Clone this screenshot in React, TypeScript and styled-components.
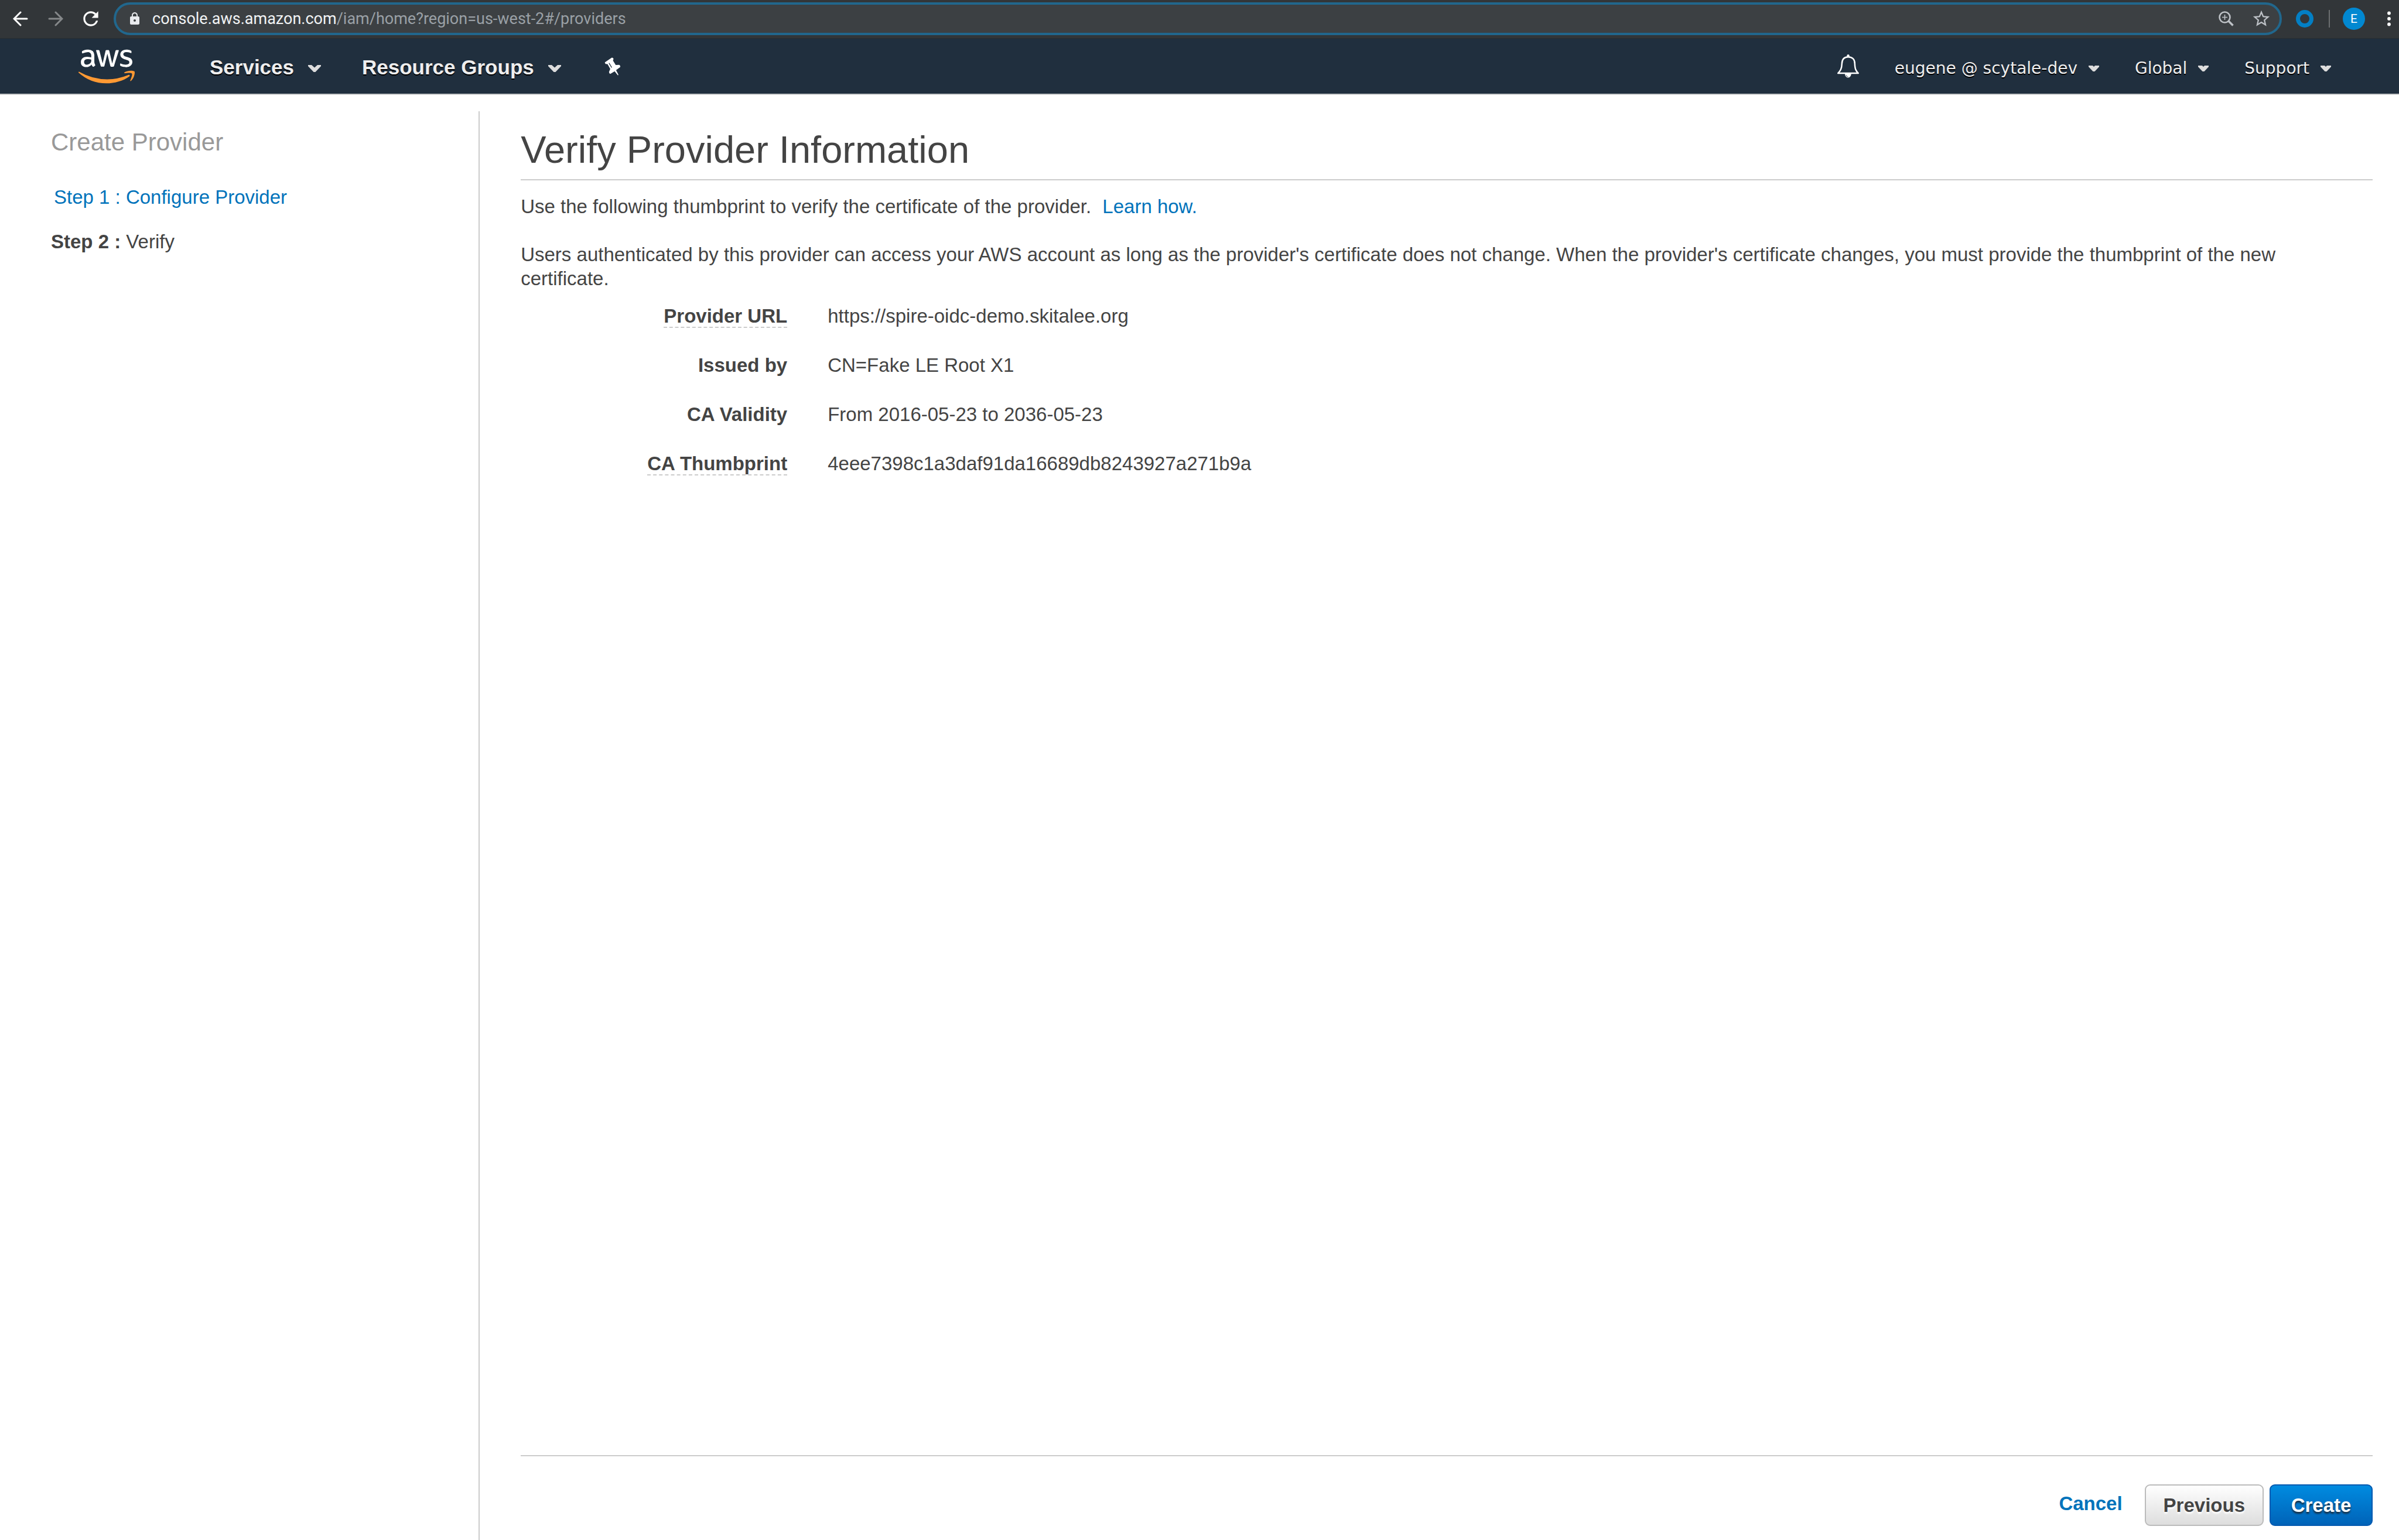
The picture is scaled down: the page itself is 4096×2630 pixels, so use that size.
import React from 'react';
import styled, { createGlobalStyle, css } from 'styled-components';
import { FaAws } from 'react-icons/fa';
import { MdLock, MdRefresh, MdStarBorder } from 'react-icons/md';

const sans = '"Helvetica Neue", "Liberation Sans", Arial, sans-serif';
const ink = '#444444';
const linkBlue = '#0073bb';
const rule = '#cccccc';
const navBlue = '#202f3e';

const GlobalStyle = createGlobalStyle`
  *, *::before, *::after { box-sizing: border-box; }
  html, body, #root { height: 100%; }
  body {
    margin: 0;
    background: #ffffff;
    color: ${ink};
    font: 33px/41px ${sans};
  }
  a { text-decoration: none; }
  button { font: inherit; cursor: pointer; }
  svg { flex: none; }
  h1, h2, p, dl, dd, dt, ol { margin: 0; padding: 0; font-weight: normal; }
`;

const Page = styled.div`
  display: flex;
  flex-direction: column;
  min-height: 100vh;
`;

/* Browser toolbar */

const Toolbar = styled.div`
  display: flex;
  align-items: center;
  height: 66px;
  padding: 0 14px 2px 20px;
  background: #323639;
  border-bottom: 1px solid #2a2d30;
`;

const ToolButton = styled.button<{ $dim?: boolean }>`
  display: flex;
  align-items: center;
  justify-content: center;
  width: 30px;
  height: 36px;
  margin-right: 30px;
  padding: 0;
  border: 0;
  background: none;
  color: ${(p) => (p.$dim ? '#85888a' : '#ffffff')};
`;

const AddressBar = styled.div`
  display: flex;
  flex: 1;
  align-items: center;
  height: 56px;
  margin-left: -6px;
  padding: 0 14px 0 20px;
  border: 4px solid #21678d;
  border-radius: 28px;
  background: #3c4043;
  color: #bdc1c6;
`;

const Url = styled.div`
  flex: 1;
  margin-left: 18px;
  color: #9aa0a6;
  font: 27px/36px Roboto, sans-serif;
`;

const Host = styled.span`
  color: #f1f3f4;
`;

const BarIcons = styled.div`
  display: flex;
  align-items: center;
  gap: 30px;
`;

const PlainButton = styled.button`
  display: flex;
  padding: 0;
  border: 0;
  background: none;
  color: inherit;
`;

const Ring = styled.span`
  width: 30px;
  height: 30px;
  margin-left: 24px;
  border: 7px solid #037fc4;
  border-radius: 50%;
`;

const Separator = styled.span`
  width: 2px;
  height: 30px;
  margin: 0 22px 0 26px;
  background: #6b6e70;
`;

const Avatar = styled.button`
  display: flex;
  align-items: center;
  justify-content: center;
  width: 38px;
  height: 38px;
  margin-right: 38px;
  padding: 0;
  border: 0;
  border-radius: 50%;
  background: #0288d1;
  color: #ffffff;
  && { font: 21px/24px Roboto, sans-serif; }
`;

/* AWS navigation */

const Nav = styled.header`
  display: flex;
  align-items: center;
  height: 96px;
  padding: 0 116px 0 134px;
  background: ${navBlue};
  border-bottom: 2px solid #c8cacb;
`;

const Logo = styled.a`
  display: flex;
  margin-right: 128px;
  svg.mark { width: 96px; height: 77px; fill: url(#aws-two-tone); }
`;

const navText = css`
  display: flex;
  align-items: center;
  border: 0;
  background: none;
  color: #eeeeee;
  text-shadow: 0 2px 0 #000000;
`;

const MainItem = styled.button`
  ${navText}
  gap: 24px;
  margin-right: 70px;
  padding: 4px 0 0;
  && { font: bold 35px/42px ${sans}; }
  svg { margin-top: 4px; }
`;

const MetaItem = styled.button`
  ${navText}
  gap: 19px;
  padding: 8px 0 0;
  && { font: 28px/42px "DejaVu Sans", Verdana, sans-serif; }
`;

const Meta = styled.div`
  display: flex;
  align-items: center;
  gap: 61px;
  margin-left: auto;
`;

const WhiteButton = styled(PlainButton)`
  color: #ffffff;
`;

const PinButton = styled(WhiteButton)`
  padding-left: 4px;
`;

/* Wizard */

const Body = styled.div`
  display: flex;
  flex: 1;
  padding-top: 28px;
`;

const Sidebar = styled.nav`
  flex: none;
  width: 20%;
  padding: 32px 87px;
  border-right: 2px solid ${rule};
`;

const SidebarTitle = styled.h2`
  color: #999999;
  font-size: 42px;
  line-height: 42px;
`;

const Steps = styled.ol`
  display: flex;
  flex-direction: column;
  gap: 35px;
  margin-top: 52px;
  list-style: none;
`;

const TextLink = styled.a`
  color: ${linkBlue};
`;

const StepLink = styled(TextLink)`
  padding-left: 5px;
`;

const Main = styled.main`
  display: flex;
  flex: 1;
  flex-direction: column;
  min-width: 0;
  padding: 28px 45px 24px 70px;
`;

const Title = styled.h1`
  padding-bottom: 12px;
  border-bottom: 2px solid ${rule};
  font-size: 65px;
  line-height: 76px;
`;

const Paragraph = styled.p`
  margin-top: 41px;
  padding-right: 24px;
  &:first-of-type { margin-top: 24px; }
`;

const LearnLink = styled(TextLink)`
  margin-left: 10px;
`;

const Details = styled.dl`
  display: grid;
  grid-template-columns: 455px 1fr;
  column-gap: 69px;
  row-gap: 43px;
  margin-top: 23px;
`;

const Term = styled.dt`
  text-align: right;
  font-weight: bold;
`;

const Hint = styled.span`
  border-bottom: 2px dashed ${rule};
`;

const Footer = styled.footer`
  display: flex;
  align-items: center;
  justify-content: flex-end;
  gap: 10px;
  margin-top: auto;
  padding-top: 48px;
  border-top: 2px solid ${rule};
`;

const CancelButton = styled.button`
  margin-right: 28px;
  padding: 0 0 6px;
  border: 0;
  background: none;
  color: ${linkBlue};
  && { font-weight: bold; }
`;

const ActionButton = styled.button<{ $primary?: boolean }>`
  min-width: 176px;
  height: 71px;
  padding: 0 30px;
  border: 2px solid ${(p) => (p.$primary ? '#0059b0' : '#bbbbbb')};
  border-radius: 9px;
  background: ${(p) =>
    p.$primary
      ? 'linear-gradient(#008be0, #0063b8)'
      : 'linear-gradient(#ffffff, #dddddd)'};
  color: ${(p) => (p.$primary ? '#ffffff' : ink)};
  text-shadow: ${(p) => (p.$primary ? '0 3px 3px #1a2a3a' : '0 3px 3px #ffffff')};
  && { font-weight: bold; }
`;

const Arrow = ({ flip }: { flip?: boolean }) => (
  <svg width="26" height="26" viewBox="0 0 26 26" fill="none" stroke="currentColor" strokeWidth="3" strokeLinecap="round" aria-hidden="true">
    <path d={flip ? 'M2 13H23M13 2L24 13L13 24' : 'M24 13H3M13 2L2 13L13 24'} />
  </svg>
);

const Chevron = () => (
  <svg width="22" height="12" viewBox="0 0 22 12" aria-hidden="true">
    <path d="M0 0H6L11 4.500L16 0H22V2L12.500 12H9.500L0 2Z" fill="#dddddd" />
  </svg>
);

const Triangle = () => (
  <svg width="18" height="10" viewBox="0 0 18 10" aria-hidden="true">
    <path d="M0 0H7L9 2L11 0H18V2L10.500 10H7.500L0 2Z" fill="#dddddd" />
  </svg>
);

const ZoomGlyph = () => (
  <svg width="26" height="26" viewBox="0 0 26 26" fill="none" stroke="currentColor" aria-hidden="true">
    <circle cx="10.500" cy="10.500" r="9" strokeWidth="2.600" />
    <path d="M17 17L24.500 24.500" strokeWidth="3.600" />
    <path d="M6 10.500H15M10.500 6V15" strokeWidth="1.600" />
  </svg>
);

const Dots = () => (
  <svg width="6" height="26" viewBox="0 0 6 26" fill="currentColor" aria-hidden="true">
    <circle cx="3" cy="3.500" r="2.900" />
    <circle cx="3" cy="13" r="2.900" />
    <circle cx="3" cy="22.500" r="2.900" />
  </svg>
);

const Pin = () => (
  <svg width="28" height="31" viewBox="316 42 90 100" aria-hidden="true">
    <path
      d="M318 71Q317 68 324 65L356 44Q364 43 366 50L363 60L378 84L398 83Q405 88 403 95L380 112L393 138L390 141L372 119L348 133Q341 131 341 122L348 106L333 79L322 78Z"
      fill="currentColor"
    />
    <path d="M341 73L356 98" stroke={navBlue} strokeWidth="4" />
  </svg>
);

const Bell = () => (
  <svg width="37" height="40" viewBox="24 36 118 127" fill="none" stroke="currentColor" aria-hidden="true">
    <path
      d="M28 138H138C125 125 120 115 119 85C119 60 103 49 83 49C63 49 50 60 49 85C48 115 40 125 28 138Z"
      strokeWidth="8"
      strokeLinejoin="round"
    />
    <circle cx="83" cy="43" r="7" fill="currentColor" stroke="none" />
    <path d="M65 140C67 169 98 169 100 140Z" fill="currentColor" stroke="none" />
    <path d="M71 147Q74 156 83 158" stroke={navBlue} strokeWidth="2.500" />
  </svg>
);

const App = () => (
  <>
    <GlobalStyle />
    <Page>
      <Toolbar>
        <ToolButton aria-label="Back"><Arrow /></ToolButton>
        <ToolButton aria-label="Forward" $dim><Arrow flip /></ToolButton>
        <ToolButton aria-label="Reload"><MdRefresh size={38} /></ToolButton>
        <AddressBar>
          <MdLock size={24} color="#e8eaed" />
          <Url>
            <Host>console.aws.amazon.com</Host>/iam/home?region=us-west-2#/providers
          </Url>
          <BarIcons>
            <PlainButton aria-label="Zoom"><ZoomGlyph /></PlainButton>
            <PlainButton aria-label="Bookmark"><MdStarBorder size={34} /></PlainButton>
          </BarIcons>
        </AddressBar>
        <Ring />
        <Separator />
        <Avatar>E</Avatar>
        <WhiteButton aria-label="Menu"><Dots /></WhiteButton>
      </Toolbar>

      <Nav>
        <Logo href="#home" aria-label="AWS">
          <svg width="0" height="0" aria-hidden="true">
            <linearGradient id="aws-two-tone" x1="0" y1="0" x2="0" y2="1">
              <stop offset="0.570" stopColor="#ffffff" />
              <stop offset="0.570" stopColor="#ff9933" />
            </linearGradient>
          </svg>
          <FaAws className="mark" />
        </Logo>
        <MainItem>Services<Chevron /></MainItem>
        <MainItem>Resource Groups<Chevron /></MainItem>
        <PinButton aria-label="Pin shortcuts"><Pin /></PinButton>
        <Meta>
          <WhiteButton aria-label="Notifications"><Bell /></WhiteButton>
          <MetaItem>eugene @ scytale-dev<Triangle /></MetaItem>
          <MetaItem>Global<Triangle /></MetaItem>
          <MetaItem>Support<Triangle /></MetaItem>
        </Meta>
      </Nav>

      <Body>
        <Sidebar>
          <SidebarTitle>Create Provider</SidebarTitle>
          <Steps>
            <li><StepLink href="#step-1">Step 1 : Configure Provider</StepLink></li>
            <li><b>Step 2 :</b> Verify</li>
          </Steps>
        </Sidebar>
        <Main>
          <Title>Verify Provider Information</Title>
          <Paragraph>
            Use the following thumbprint to verify the certificate of the provider.{' '}
            <LearnLink href="#learn">Learn how.</LearnLink>
          </Paragraph>
          <Paragraph>
            Users authenticated by this provider can access your AWS account as long as the
            provider's certificate does not change. When the provider's certificate changes, you
            must provide the thumbprint of the new certificate.
          </Paragraph>
          <Details>
            <Term><Hint>Provider URL</Hint></Term>
            <dd>https://spire-oidc-demo.skitalee.org</dd>
            <Term>Issued by</Term>
            <dd>CN=Fake LE Root X1</dd>
            <Term>CA Validity</Term>
            <dd>From 2016-05-23 to 2036-05-23</dd>
            <Term><Hint>CA Thumbprint</Hint></Term>
            <dd>4eee7398c1a3daf91da16689db8243927a271b9a</dd>
          </Details>
          <Footer>
            <CancelButton>Cancel</CancelButton>
            <ActionButton>Previous</ActionButton>
            <ActionButton $primary>Create</ActionButton>
          </Footer>
        </Main>
      </Body>
    </Page>
  </>
);

export default App;
